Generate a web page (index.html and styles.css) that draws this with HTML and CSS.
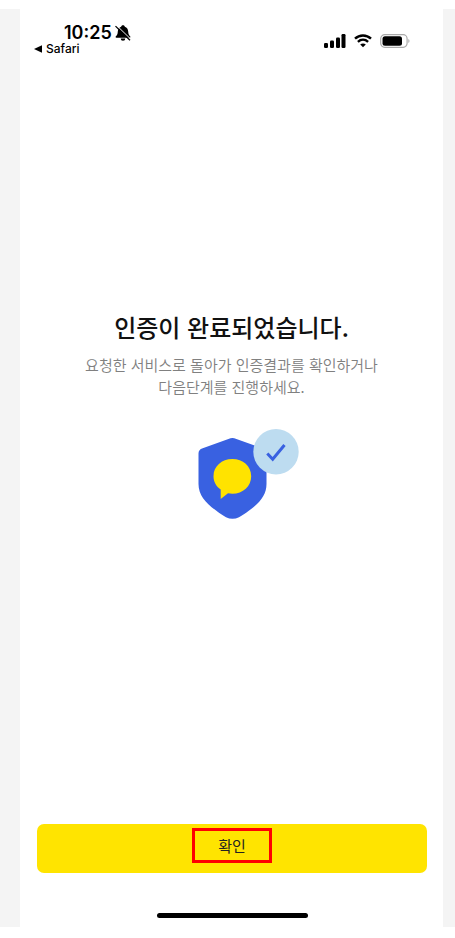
FILE: index.html
```html
<!DOCTYPE html>
<html lang="ko">
<head>
<meta charset="utf-8">
<meta name="viewport" content="width=device-width, initial-scale=1">
<title>인증 완료</title>
<link rel="stylesheet" href="styles.css">
</head>
<body>
<div class="backdrop">
  <div class="phone">
    <header class="status">
      <div class="status-left">
        <div class="clock">
          <span>10:25</span>
          <svg class="bell" width="16" height="16" viewBox="0 0 16 16" aria-hidden="true">
            <path d="M8 .3c-1 0-1.700.6-1.800 1.400C4 2.400 2.900 4.200 2.800 6.500 2.700 9.300 2 10.200.9 11.300c-.6.600-.3 1.500.5 1.500h13.200c.8 0 1.100-.9.5-1.500-1.100-1.100-1.800-2-1.900-4.800C13.100 4.200 12 2.400 9.800 1.700 9.700.9 9 .3 8 .3zM5.700 13.500a2.300 2.200 0 0 0 4.600 0z"/>
            <path class="slash-gap" d="M1.400.2 15.900 14.300"/>
            <path class="slash" d="M.5 1.100 15 15.200"/>
          </svg>
        </div>
        <a class="back" href="#">
          <svg width="8" height="8" viewBox="0 0 8 8" aria-hidden="true"><path d="M0 4 8 .2v7.600z"/></svg>
          <span>Safari</span>
        </a>
      </div>
      <div class="status-right">
        <svg width="22" height="14" viewBox="0 0 22 14" aria-hidden="true">
          <rect x="0" y="9" width="4" height="5" rx="1.200"/>
          <rect x="6" y="6.500" width="4" height="7.500" rx="1.200"/>
          <rect x="12" y="3.500" width="4" height="10.500" rx="1.200"/>
          <rect x="17.500" y="0" width="4" height="14" rx="1.200"/>
        </svg>
        <svg class="wifi" width="18" height="14" viewBox="0 0 18 14" aria-hidden="true">
          <path class="arc" d="M1 4.700C5.500.4 12.500.4 17 4.700"/>
          <path class="arc" d="M3.900 7.800c3-2.700 7.200-2.700 10.200 0"/>
          <path d="M9 13.300 6.200 10.500c1.600-1.400 4-1.400 5.600 0z"/>
        </svg>
        <svg width="30" height="14" viewBox="0 0 30 14" aria-hidden="true">
          <rect class="case" x=".7" y=".7" width="26.400" height="12.600" rx="4"/>
          <rect x="2.500" y="2.300" width="19.500" height="9.400" rx="2.500"/>
          <path class="cap" d="M28.300 5c1.600.8 1.600 3.200 0 4z"/>
        </svg>
      </div>
    </header>
    <main class="result">
      <h1>인증이 완료되었습니다.</h1>
      <p>요청한 서비스로 돌아가 인증결과를 확인하거나<br>다음단계를 진행하세요.</p>
      <svg class="shield" width="102" height="90" viewBox="0 0 102 90" aria-hidden="true">
        <path fill="#3961e1" d="M33.500 9.300q1.900-.8 3.800 0L66 19.600q3.500 1.300 3.500 5V55c0 14-11 23-27.500 33.300q-6.500 3-13 0C13 78 1.500 69 1.500 55V24.600q0-3.700 3.500-5z"/>
        <path fill="#ffe300" d="M35.300 30C24.700 30 16.500 37.300 16.500 47.200c0 5.300 2.700 10.200 7.200 13.400V69.900l7.300-5.600c1.400.3 2.800.4 4.300.4C46 64.700 54.200 57.200 54.200 47.200S46 30 35.300 30z"/>
        <circle cx="79" cy="22.700" r="22.700" fill="#bddcf0"/>
        <path fill="none" stroke="#3961e1" stroke-width="3" d="M70.300 24.500 75.700 30.200 87.500 16"/>
      </svg>
    </main>
    <footer class="actions">
      <button class="confirm" type="button"><span class="mark">확인</span></button>
      <div class="home-bar"></div>
    </footer>
  </div>
</div>
</body>
</html>
```
FILE: styles.css
```css
* {
  box-sizing: border-box;
}

body {
  margin: 0;
  padding: 9px 0 11px;
  min-height: 100vh;
  display: flex;
  background: #fff;
  font-family: "Noto Sans CJK KR", sans-serif;
  color: #111;
}

.backdrop {
  flex: 1;
  display: flex;
  padding: 0 12px 0 20px;
  background: #f4f4f4;
}

.phone {
  flex: 1;
  display: flex;
  flex-direction: column;
  background: #fff;
}

.status {
  display: flex;
  justify-content: space-between;
  padding: 14px 33px 0 14px;
  font-family: Inter, sans-serif;
  color: #000;
}

.clock {
  display: flex;
  align-items: center;
  gap: 3px;
  padding-left: 30px;
  font-size: 18px;
  line-height: 20px;
  font-weight: 600;
}

.slash,
.slash-gap {
  fill: none;
  stroke: #000;
  stroke-width: 1.3;
}

.slash-gap {
  stroke: #fff;
  stroke-width: 1;
}

.back {
  display: flex;
  align-items: center;
  gap: 4px;
  font-size: 12px;
  line-height: 12px;
  font-weight: 500;
  color: #000;
  text-decoration: none;
}

.status-right {
  display: flex;
  gap: 8px;
  padding-top: 11px;
}

.arc {
  fill: none;
  stroke: #000;
  stroke-width: 2.4;
}

.case {
  fill: none;
  stroke: #aaa;
  stroke-width: 1.2;
}

.cap {
  fill: #aaa;
}

.result {
  flex: 1;
  display: flex;
  flex-direction: column;
  align-items: center;
  padding-top: 254px;
  text-align: center;
}

h1 {
  margin: 0;
  font-size: 24px;
  line-height: 36px;
  font-weight: 500;
}

p {
  margin: 9px 0 0;
  font-size: 15px;
  line-height: 22px;
  font-weight: 350;
  color: #808080;
}

.shield {
  margin: 31px 0 0 32px;
}

.actions {
  display: flex;
  flex-direction: column;
  align-items: center;
  gap: 40px;
  padding: 0 16px 9px 17px;
}

.confirm {
  width: 100%;
  height: 49px;
  padding: 0 0 6px;
  display: flex;
  align-items: center;
  justify-content: center;
  border: 0;
  border-radius: 7px;
  background: #ffe400;
  font: inherit;
  color: #222;
}

.mark {
  width: 80px;
  border: 3px solid #f00;
  font-size: 15px;
  line-height: 29px;
}

.home-bar {
  width: 151px;
  height: 5px;
  border-radius: 3px;
  background: #000;
}
```
